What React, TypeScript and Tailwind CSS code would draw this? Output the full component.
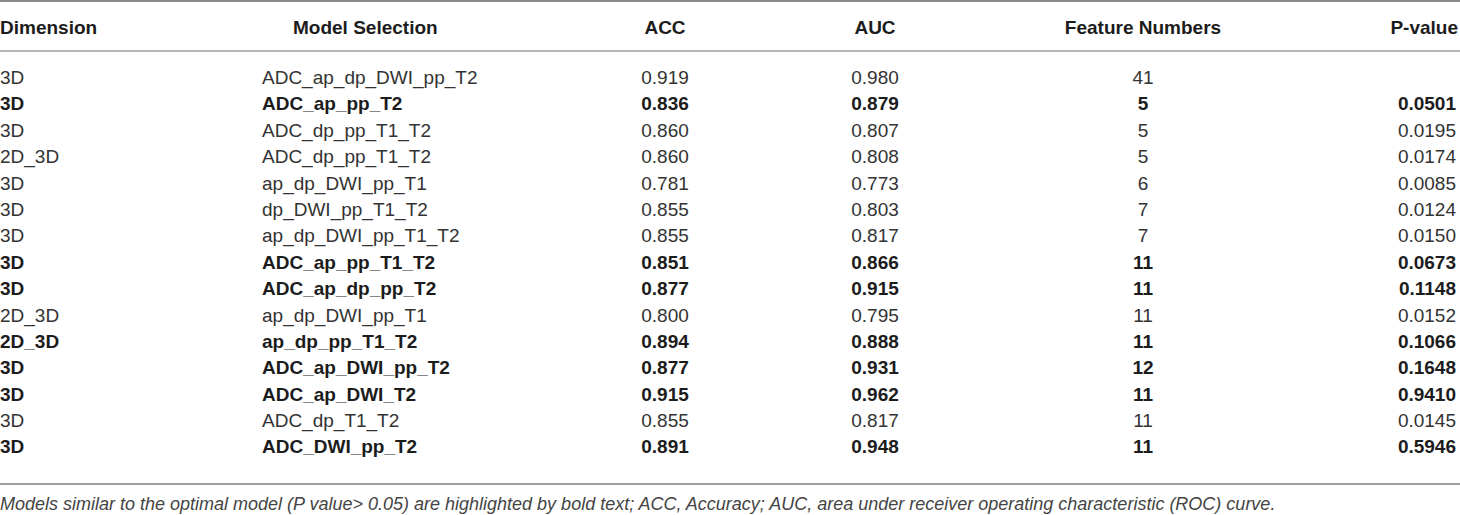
const rows: [string, string, string, string, string, string, boolean][] = [
  ["3D", "ADC_ap_dp_DWI_pp_T2", "0.919", "0.980", "41", "", false],
  ["3D", "ADC_ap_pp_T2", "0.836", "0.879", "5", "0.0501", true],
  ["3D", "ADC_dp_pp_T1_T2", "0.860", "0.807", "5", "0.0195", false],
  ["2D_3D", "ADC_dp_pp_T1_T2", "0.860", "0.808", "5", "0.0174", false],
  ["3D", "ap_dp_DWI_pp_T1", "0.781", "0.773", "6", "0.0085", false],
  ["3D", "dp_DWI_pp_T1_T2", "0.855", "0.803", "7", "0.0124", false],
  ["3D", "ap_dp_DWI_pp_T1_T2", "0.855", "0.817", "7", "0.0150", false],
  ["3D", "ADC_ap_pp_T1_T2", "0.851", "0.866", "11", "0.0673", true],
  ["3D", "ADC_ap_dp_pp_T2", "0.877", "0.915", "11", "0.1148", true],
  ["2D_3D", "ap_dp_DWI_pp_T1", "0.800", "0.795", "11", "0.0152", false],
  ["2D_3D", "ap_dp_pp_T1_T2", "0.894", "0.888", "11", "0.1066", true],
  ["3D", "ADC_ap_DWI_pp_T2", "0.877", "0.931", "12", "0.1648", true],
  ["3D", "ADC_ap_DWI_T2", "0.915", "0.962", "11", "0.9410", true],
  ["3D", "ADC_dp_T1_T2", "0.855", "0.817", "11", "0.0145", false],
  ["3D", "ADC_DWI_pp_T2", "0.891", "0.948", "11", "0.5946", true],
];

const grid = "grid grid-cols-[262px_298px_210px_210px_326px_1fr] items-center";

export default function App() {
  return (
    <div className="w-[1460px] h-[515px] bg-white font-['Liberation_Sans',Arial,sans-serif] text-[19px] text-[#333] overflow-hidden">
      <div className="h-[2px] bg-[#8a8a8a]" />
      <div className={`${grid} h-[48px] pt-[4px] font-bold text-[#1c1c1c]`}>
        <div>Dimension</div>
        <div className="pl-[31px]">Model Selection</div>
        <div className="text-center">ACC</div>
        <div className="text-center">AUC</div>
        <div className="text-center">Feature Numbers</div>
        <div className="text-right pr-[2px]">P-value</div>
      </div>
      <div className="h-[2px] bg-[#b5b5b5]" />
      <div className="pt-[12px]">
        {rows.map((r, i) => (
          <div
            key={i}
            className={`${grid} h-[26.4px] ${r[6] ? "font-bold text-[#1c1c1c]" : ""}`}
          >
            <div>{r[0]}</div>
            <div>{r[1]}</div>
            <div className="text-center">{r[2]}</div>
            <div className="text-center">{r[3]}</div>
            <div className="text-center">{r[4]}</div>
            <div className="text-right pr-[4px]">{r[5]}</div>
          </div>
        ))}
      </div>
      <div className="mt-[23px] h-[2px] bg-[#a0a0a0]" />
      <div className="pt-[10px] text-[18px] leading-[18px] italic text-[#444]">
        Models similar to the optimal model (P value&gt; 0.05) are highlighted by bold text; ACC, Accuracy; AUC, area under receiver operating characteristic (ROC) curve.
      </div>
    </div>
  );
}
